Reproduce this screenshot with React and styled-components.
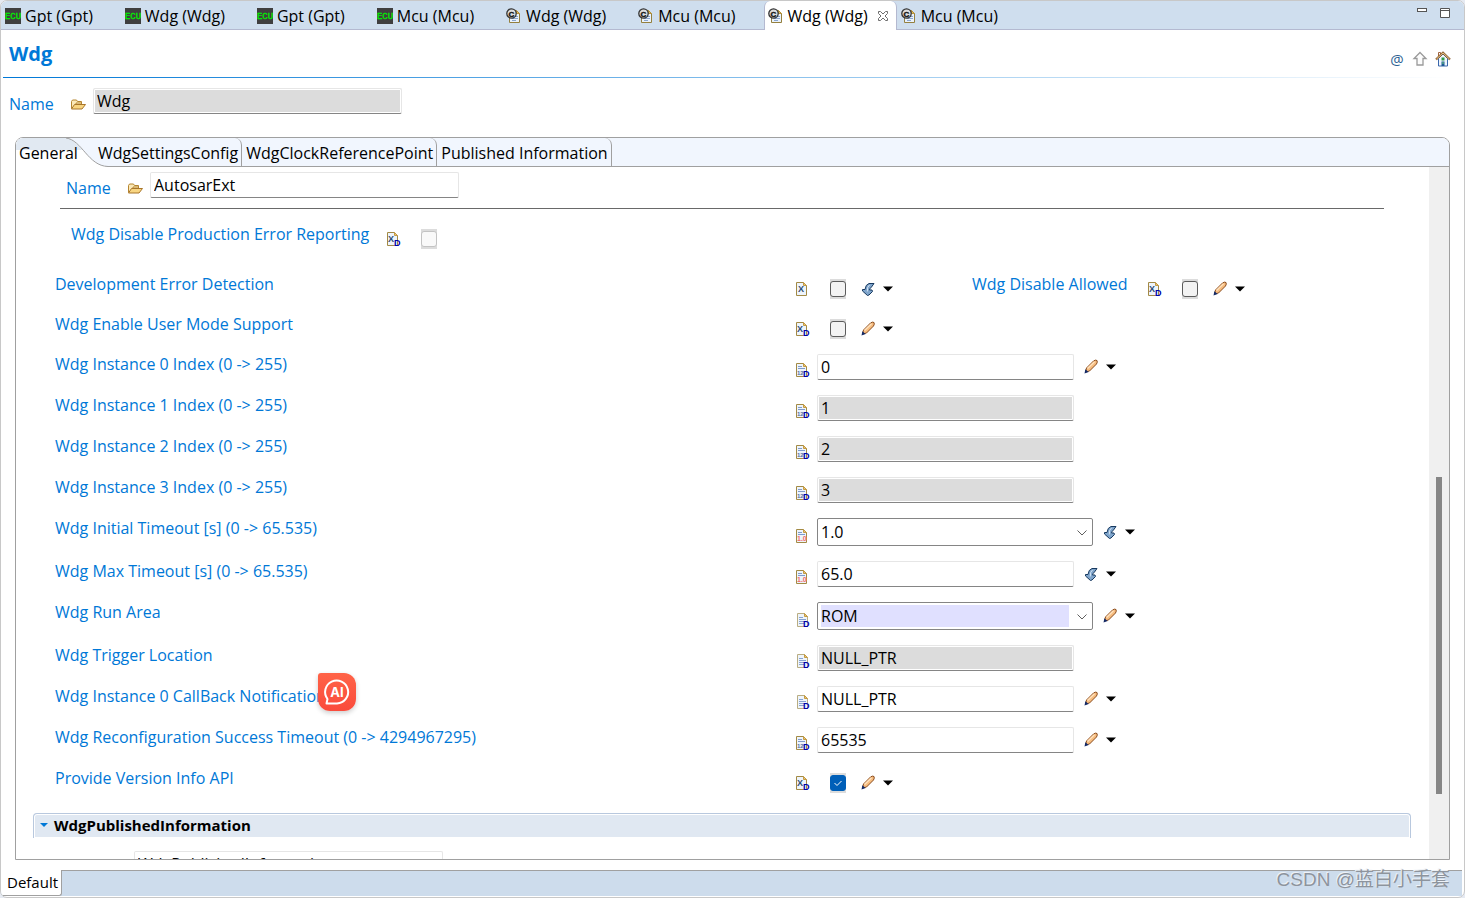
import React from 'react';
import styled, { createGlobalStyle, css } from 'styled-components';

const editorTabs = [
  { label: 'Gpt (Gpt)', icon: 'ecu' },
  { label: 'Wdg (Wdg)', icon: 'ecu' },
  { label: 'Gpt (Gpt)', icon: 'ecu' },
  { label: 'Mcu (Mcu)', icon: 'ecu' },
  { label: 'Wdg (Wdg)', icon: 'config' },
  { label: 'Mcu (Mcu)', icon: 'config' },
  { label: 'Wdg (Wdg)', icon: 'config', active: true },
  { label: 'Mcu (Mcu)', icon: 'config' },
];

const pageTabs = ['WdgSettingsConfig', 'WdgClockReferencePoint', 'Published Information'];

const fields = [
  { id: 'userMode', label: 'Wdg Enable User Mode Support', type: 'check', icon: 'bool', tool: 'pencil' },
  { id: 'index0', label: 'Wdg Instance 0 Index (0 -> 255)', type: 'text', icon: 'int', value: '0', tool: 'pencil' },
  { id: 'index1', label: 'Wdg Instance 1 Index (0 -> 255)', type: 'text', icon: 'int', value: '1', disabled: true },
  { id: 'index2', label: 'Wdg Instance 2 Index (0 -> 255)', type: 'text', icon: 'int', value: '2', disabled: true },
  { id: 'index3', label: 'Wdg Instance 3 Index (0 -> 255)', type: 'text', icon: 'int', value: '3', disabled: true },
  { id: 'initTimeout', label: 'Wdg Initial Timeout [s] (0 -> 65.535)', type: 'select', icon: 'float', value: '1.0', tool: 'calc' },
  { id: 'maxTimeout', label: 'Wdg Max Timeout [s] (0 -> 65.535)', type: 'text', icon: 'float', value: '65.0', tool: 'calc' },
  { id: 'runArea', label: 'Wdg Run Area', type: 'select', icon: 'text', value: 'ROM', tool: 'pencil', marked: true },
  { id: 'trigger', label: 'Wdg Trigger Location', type: 'text', icon: 'text', value: 'NULL_PTR', disabled: true },
  { id: 'callback', label: 'Wdg Instance 0 CallBack Notification', type: 'text', icon: 'text', value: 'NULL_PTR', tool: 'pencil', assistant: true },
  { id: 'reconfig', label: 'Wdg Reconfiguration Success Timeout (0 -> 4294967295)', type: 'text', icon: 'int', value: '65535', tool: 'pencil' },
  { id: 'versionApi', label: 'Provide Version Info API', type: 'check', icon: 'bool', tool: 'pencil', checked: true },
];

function EcuIcon() {
  return (
    <svg width="16" height="16" viewBox="0 0 16 16">
      <rect width="16" height="16" fill="#3f3f3f" />
      <text x="8" y="11" textAnchor="middle" fontFamily="Liberation Mono" fontSize="9" fill="#00f000" stroke="#00f000" strokeWidth="0.3">ECU</text>
    </svg>
  );
}

function ConfigIcon() {
  return (
    <svg width="16" height="16" viewBox="0 0 16 16">
      <path d="M3.500 2.500h7l3 3v9h-10z" fill="#eaf2fb" stroke="#94803f" />
      <path d="M10.500 2.500v3h3z" fill="#e6bd62" stroke="#b99238" />
      <path d="M6 8.500h6M6 10.500h6M6 12.500h4" stroke="#8aa6d0" />
      <circle cx="5.500" cy="5.500" r="4.700" fill="#dedede" stroke="#333" strokeWidth="1.300" />
      <text x="5.500" y="8.500" textAnchor="middle" fontFamily="Liberation Sans" fontSize="8" fontWeight="700" fill="#111" stroke="#111" strokeWidth="0.4">C</text>
    </svg>
  );
}

function CloseIcon() {
  return (
    <svg width="12" height="12" viewBox="0 0 12 12">
      <path
        d="M1.500 1.500h2L6 4l2.500-2.500h2v2L8 6l2.500 2.500v2h-2L6 8l-2.500 2.500h-2v-2L4 6 1.500 3.500z"
        fill="#fff"
        stroke="#6d6d6d"
      />
    </svg>
  );
}

function FolderIcon() {
  return (
    <svg width="16" height="16" viewBox="0 0 16 16">
      <path d="M1.500 12.500v-7l1-1.500h4l1 1.500h4v3" fill="#fbe9b8" stroke="#b5852f" />
      <path d="M1.500 13l3-4.500h11l-3.500 4.500z" fill="#f8d581" stroke="#a8752a" />
      <path d="M6 8.500v-1.500h5" fill="none" stroke="#b5852f" />
    </svg>
  );
}

// Page glyph in front of every parameter; the content tells the value type
function TypeIcon({ kind, derived = true }) {
  const small = kind === 'text' ? 1 : 0;
  return (
    <svg width="16" height="16" viewBox="0 0 16 16">
      <g transform={`translate(${small} 0)`}>
        <path d="M1.500 1.500h7l3 3v10h-10z" fill="#eef4fb" stroke={kind === 'text' ? '#b9ad82' : '#a28a45'} />
        <path d="M8.500 1.500v3h3z" fill="#e9c777" stroke="#c49b45" />
        {kind === 'text' && <path d="M3 5.500h4M3 7.500h7M3 9.500h7M3 11.500h5" stroke="#86a3d2" />}
        {(kind === 'int' || kind === 'float') && <path d="M3 4.500h4M3 6.500h7" stroke="#7f9bcb" />}
      </g>
      {kind === 'bool' && (
        <text x={derived ? 5 : 6} y="11" textAnchor="middle" fontFamily="Liberation Sans" fontSize="9" fontWeight="700" fill="#2b4a73">X</text>
      )}
      {kind === 'int' && (
        <text x="2" y="13" fontFamily="Liberation Sans" fontSize="6" fontWeight="700" fill="#54719f">12</text>
      )}
      {kind === 'float' && (
        <text x="2" y="13" fontFamily="Liberation Sans" fontSize="7" fontWeight="700" fill="#f26d6d">1.0</text>
      )}
      {derived && kind !== 'float' && (
        <text x="8" y="15" fontFamily="Liberation Sans" fontSize="9" fontWeight="700" fill="#0000a8">D</text>
      )}
    </svg>
  );
}

function PencilIcon() {
  return (
    <svg width="16" height="16" viewBox="0 0 16 16">
      <path d="M2.500 13l1-4L10.500 2q2-1.500 3.500-.5.800 1.500-.5 3.500L6.500 12z" fill="#f7bd80" stroke="#8a4b1c" />
      <path d="M4.500 9.500L11.500 2.800" stroke="#ffe2bd" strokeWidth="1.500" />
      <path d="M1.500 14.500l.8-4.200 3.400 2.700z" fill="#142a66" />
    </svg>
  );
}

function CalcIcon() {
  return (
    <svg width="16" height="16" viewBox="0 0 16 16">
      <path
        d="M14 2.500H9Q5.500 3.500 5 8.500H2.500v1.500l5 4.500 1.500-.5 3.500-3.500-.5-1.500H9.500q.5-2 2-3z"
        fill="#7fa5cc"
        stroke="#17395f"
        strokeLinejoin="round"
      />
      <path d="M9.500 4Q7 5.500 7.300 10.500" fill="none" stroke="#d3e4f4" />
    </svg>
  );
}

function Caret() {
  return (
    <svg width="10" height="6" viewBox="0 0 10 6">
      <path d="M0 0.500h10L5 5.500z" fill="#000" />
    </svg>
  );
}

function HomeIcon() {
  return (
    <svg width="16" height="16" viewBox="0 0 16 16">
      <path d="M3.500 7.500v7.500h9V7.500L8 3z" fill="#eef5fd" stroke="#3a67ac" />
      <path d="M3.500 1.500h2v4h-2z" fill="#fff" stroke="#a0623d" />
      <path d="M1 8.500L8 1.800l7 6.700" fill="none" stroke="#8a5a2a" strokeWidth="2.200" />
      <path d="M1.500 8L8 1.900 14.500 8" fill="none" stroke="#f0cf92" />
      <rect x="6.500" y="6.500" width="3" height="3" fill="#2f9a4a" />
      <rect x="6.500" y="10.500" width="3" height="4.500" fill="#1e5a94" />
      <path d="M7 12h2" stroke="#6ed07c" />
    </svg>
  );
}

function UpIcon() {
  return (
    <svg width="16" height="16" viewBox="0 0 16 16">
      <path d="M8 1.500l6 6H11v6.500H5V7.500H2z" fill="#fcfcfc" stroke="#9a9a9a" strokeWidth="1.300" />
    </svg>
  );
}

function AssistantIcon() {
  return (
    <svg width="28" height="28" viewBox="0 0 28 28">
      <path d="M3.500 25.500l1-4.500A11.500 11.500 0 1 1 14 25.500z" fill="none" stroke="#fff" strokeWidth="2" strokeLinejoin="round" />
      <text x="14" y="18.500" textAnchor="middle" fontFamily="Inter" fontSize="13" fontWeight="700" fill="#fff">AI</text>
    </svg>
  );
}

function Tools({ kind, name }) {
  return (
    <ToolButton type="button" aria-label={`Edit ${name}`}>
      {kind === 'calc' ? <CalcIcon /> : <PencilIcon />}
      <Caret />
    </ToolButton>
  );
}

function Check({ id, checked, disabled }) {
  return (
    <CheckFrame>
      <CheckInput id={id} type="checkbox" defaultChecked={checked} disabled={disabled} />
      {checked && (
        <CheckMark width="16" height="16" viewBox="0 0 16 16">
          <path d="M4.500 8l2.500 2.500L11.500 6" fill="none" stroke="#fff" />
        </CheckMark>
      )}
    </CheckFrame>
  );
}

function Control({ field }) {
  const { id, type, value, disabled, checked, marked } = field;
  if (type === 'check') {
    return <Check id={id} checked={checked} disabled={disabled} />;
  }
  if (type === 'select') {
    return (
      <SelectFrame>
        <Select id={id} defaultValue={value} $marked={marked}>
          <option>{value}</option>
        </Select>
        <Chevron width="10" height="6" viewBox="0 0 10 6">
          <path d="M0.500 0.500L5 5l4.500-4.500" fill="none" stroke="#5f5f5f" />
        </Chevron>
      </SelectFrame>
    );
  }
  return <TextInput id={id} type="text" defaultValue={value} disabled={disabled} />;
}

function FieldControls({ field }) {
  return (
    <Controls>
      <IconSlot>
        <TypeIcon kind={field.icon} derived={!field.own} />
      </IconSlot>
      <ControlGroup>
        <Control field={field} />
        {field.tool && <Tools kind={field.tool} name={field.label} />}
      </ControlGroup>
    </Controls>
  );
}

function NameField({ id, value, disabled }) {
  return (
    <NameRow>
      <NameLabel htmlFor={id}>Name</NameLabel>
      <FolderSlot>
        <FolderIcon />
      </FolderSlot>
      <TextInput id={id} type="text" defaultValue={value} disabled={disabled} $wide />
    </NameRow>
  );
}

function App() {
  const disableAllowed = { id: 'disableAllowed', label: 'Wdg Disable Allowed', type: 'check', icon: 'bool', tool: 'pencil' };
  const devError = { id: 'devError', label: 'Development Error Detection', type: 'check', icon: 'bool', tool: 'calc', own: true };
  const production = { id: 'production', label: 'Wdg Disable Production Error Reporting', type: 'check', icon: 'bool', disabled: true };

  return (
    <>
      <GlobalStyle />
      <Window>
        <EditorBar>
          {editorTabs.map((tab, i) => (
            <EditorTab key={i} type="button" $active={tab.active}>
              {tab.icon === 'ecu' ? <EcuIcon /> : <ConfigIcon />}
              <span>{tab.label}</span>
              <CloseSlot>{tab.active && <CloseIcon />}</CloseSlot>
            </EditorTab>
          ))}
          <WindowButtons>
            <WindowButton type="button" aria-label="Minimize">
              <svg width="10" height="10" viewBox="0 0 10 10">
                <rect x="0.500" y="0.500" width="9" height="3" fill="#fff" stroke="#555" />
              </svg>
            </WindowButton>
            <WindowButton type="button" aria-label="Maximize">
              <svg width="10" height="10" viewBox="0 0 10 10">
                <path d="M0.500 0.500h9v9h-9zM0.500 2.500h9" fill="#fff" stroke="#555" />
              </svg>
            </WindowButton>
          </WindowButtons>
        </EditorBar>

        <Header>
          <Title>Wdg</Title>
          <HeaderTools>
            <HeaderButton type="button" aria-label="Link">@</HeaderButton>
            <HeaderButton type="button" aria-label="Up"><UpIcon /></HeaderButton>
            <HeaderButton type="button" aria-label="Home"><HomeIcon /></HeaderButton>
          </HeaderTools>
        </Header>
        <HeaderLine />

        <ModuleName>
          <NameField id="moduleName" value="Wdg" disabled />
        </ModuleName>

        <Folder>
          <PageTabs>
            <ActivePageTab type="button">
              <TabCurve width="93" height="29" viewBox="0 0 93 29">
                <path d="M0 0H50C66 2 72 28 92 28.500V29H0z" fill="#fff" />
                <path d="M0 0H50C57 1 62 7 66 12H0z" fill="#e1e9f2" />
                <path d="M50 0C66 2 72 28 92 28.500" fill="none" stroke="#a0a0a0" />
              </TabCurve>
              <span>General</span>
            </ActivePageTab>
            {pageTabs.map((tab) => (
              <PageTab key={tab} type="button">{tab}</PageTab>
            ))}
          </PageTabs>
          <FolderBody>
            <Content>
              <ExtBlock>
                <NameField id="extName" value="AutosarExt" />
              </ExtBlock>
              <Divider />
              <ProductionRow>
                <Label htmlFor={production.id}>{production.label}</Label>
                <FieldControls field={production} />
              </ProductionRow>
              <Fields>
                <FieldRow $split>
                  <Label htmlFor={devError.id}>{devError.label}</Label>
                  <FieldControls field={devError} />
                  <SideField>
                    <Label htmlFor={disableAllowed.id}>{disableAllowed.label}</Label>
                    <FieldControls field={disableAllowed} />
                  </SideField>
                </FieldRow>
                {fields.map((field) => (
                  <FieldRow key={field.id}>
                    <LabelCell>
                      <Label htmlFor={field.id}>{field.label}</Label>
                      {field.assistant && (
                        <AssistantButton type="button" aria-label="Assistant">
                          <AssistantIcon />
                        </AssistantButton>
                      )}
                    </LabelCell>
                    <FieldControls field={field} />
                  </FieldRow>
                ))}
              </Fields>
              <SectionHeader type="button">
                <svg width="8" height="4" viewBox="0 0 8 4">
                  <path d="M0 0h8L4 4z" fill="#0078d7" />
                </svg>
                WdgPublishedInformation
              </SectionHeader>
              <PublishedBlock>
                <NameField id="publishedName" value="WdgPublishedInformation" />
              </PublishedBlock>
            </Content>
            <ScrollTrack>
              <ScrollThumb />
            </ScrollTrack>
          </FolderBody>
        </Folder>

        <BottomBar>
          <BottomTab type="button">Default</BottomTab>
        </BottomBar>
        <Watermark>CSDN @蓝白小手套</Watermark>
      </Window>
    </>
  );
}

export default App;

const GlobalStyle = createGlobalStyle`
  * {
    box-sizing: border-box;
  }
  body {
    margin: 0;
    background: #e6eaf2;
    color: #000;
    font-family: "Open Sans", "Noto Sans CJK SC", sans-serif;
    font-size: 16px;
    line-height: 20px;
  }
  button, input, select {
    font: inherit;
    color: inherit;
  }
  button {
    padding: 0;
    border: 0;
    background: none;
  }
  svg {
    display: block;
    flex: none;
  }
`;

const Window = styled.div`
  position: relative;
  display: flex;
  flex-direction: column;
  height: 100vh;
  padding-bottom: 1px;
  border: 1px solid #c8c8c8;
  border-radius: 7px;
  background: #fff;
  overflow: hidden;
`;

const EditorBar = styled.div`
  display: flex;
  flex: none;
  height: 29px;
  border-bottom: 1px solid #b4b9d0;
  background: #cfdeee;
`;

const EditorTab = styled.button`
  display: flex;
  align-items: center;
  gap: 4px;
  height: 28px;
  padding: 2px 0 0 4px;
  white-space: nowrap;
  ${(props) =>
    props.$active &&
    css`
      height: 29px;
      padding-bottom: 1px;
      padding-left: 3px;
      border: solid #b4b9d0;
      border-width: 0 1px;
      border-radius: 6px 6px 0 0;
      background: #fff;
    `}
`;

const CloseSlot = styled.span`
  width: 24px;
  padding-left: 5px;
`;

const WindowButtons = styled.div`
  display: flex;
  gap: 13px;
  margin-left: auto;
  padding: 7px 14px 0 0;
`;

const WindowButton = styled.button`
  width: 10px;
  height: 10px;
`;

const Header = styled.header`
  display: flex;
  flex: none;
  align-items: center;
  justify-content: space-between;
  height: 47px;
  padding: 0 13px 0 8px;
`;

const Title = styled.h1`
  margin: 0;
  color: #0078d7;
  font-size: 20px;
  line-height: 24px;
`;

const HeaderTools = styled.div`
  display: flex;
  gap: 7px;
  padding-top: 11px;
`;

const HeaderButton = styled.button`
  width: 16px;
  height: 16px;
  color: #2c5f93;
  font-size: 15px;
  line-height: 14px;
`;

const HeaderLine = styled.div`
  flex: none;
  height: 1px;
  margin: 0 13px 0 2px;
  background: linear-gradient(to right, #0078d7, #fff);
`;

const NameRow = styled.div`
  display: flex;
  height: 26px;
`;

const NameLabel = styled.label`
  width: 61px;
  padding-top: 6px;
  color: #0078d7;
`;

const FolderSlot = styled.span`
  width: 23px;
  padding-top: 8px;
`;

const TextInput = styled.input`
  width: ${(props) => (props.$wide ? '309px' : '257px')};
  height: 26px;
  padding: 0 3px;
  border: 1px solid #e6e6e6;
  border-bottom-color: #858585;
  border-radius: 2px;
  background: #fff;
  &:disabled {
    background: #dcdcdc;
    box-shadow: inset 0 0 0 1px #fff;
    color: #000;
  }
`;

const ModuleName = styled.div`
  flex: none;
  padding: 10px 8px 23px;
`;

const Folder = styled.section`
  display: flex;
  flex: 1;
  flex-direction: column;
  min-height: 0;
  margin: 0 14px 10px;
  border: 1px solid #a0a0a0;
  border-radius: 8px 8px 0 0;
  overflow: hidden;
`;

const PageTabs = styled.div`
  display: flex;
  flex: none;
  height: 29px;
  border-bottom: 1px solid #a0a0a0;
  background: #f1f6fe;
`;

const PageTab = styled.button`
  height: 28px;
  padding: 1px 3px 0 4px;
  border-right: 1px solid #a0a0a0;
  border-radius: 0 7px 0 0;
  white-space: nowrap;
`;

const ActivePageTab = styled.button`
  position: relative;
  width: 78px;
  height: 29px;
  padding: 0 0 0 3px;
  text-align: left;
  span {
    position: relative;
  }
`;

const TabCurve = styled.svg`
  position: absolute;
  top: 0;
  left: 0;
`;

const FolderBody = styled.div`
  display: flex;
  flex: 1;
  min-height: 0;
`;

const Content = styled.div`
  flex: 1;
  min-width: 0;
  padding: 5px 18px 0 17px;
  overflow: hidden;
`;

const ExtBlock = styled.div`
  padding-left: 33px;
`;

const Divider = styled.hr`
  height: 1px;
  margin: 10px 27px 15px;
  border: 0;
  background: #696969;
`;

const Label = styled.label`
  color: #0078d7;
  white-space: nowrap;
`;

const ProductionRow = styled.div`
  display: flex;
  gap: 17px;
  height: 25px;
  padding-left: 38px;
`;

const Fields = styled.div`
  display: flex;
  flex-direction: column;
  gap: 15px;
  padding: 25px 0 20px 22px;
`;

const FieldRow = styled.div`
  display: grid;
  grid-template-columns: ${(props) => (props.$split ? '740fr 177fr 439fr' : '740fr 616fr')};
`;

const SideField = styled.div`
  display: flex;
  gap: 19px;
`;

const LabelCell = styled.div`
  position: relative;
  justify-self: start;
  height: 20px;
`;

const Controls = styled.div`
  display: flex;
  align-items: flex-end;
  min-height: 25px;
`;

const IconSlot = styled.span`
  width: 22px;
  padding-bottom: 2px;
`;

const ControlGroup = styled.div`
  display: flex;
  align-items: center;
  gap: 9px;
`;

const ToolButton = styled.button`
  display: flex;
  align-items: center;
  gap: 7px;
`;

const CheckFrame = styled.span`
  position: relative;
  display: block;
  width: 16px;
  height: 20px;
  margin: 0 5px 0 13px;
  padding: 2px 0;
  background: #dcdcdc;
`;

const CheckInput = styled.input`
  appearance: none;
  display: block;
  width: 16px;
  height: 16px;
  margin: 0;
  border: 1px solid #5c5c5c;
  border-radius: 3px;
  background: #f3f3f3;
  &:checked {
    border-color: #005fb8;
    background: #005fb8;
  }
  &:disabled {
    border-color: #c3c3c3;
    background: #f9f9f9;
  }
`;

const CheckMark = styled.svg`
  position: absolute;
  top: 2px;
  left: 0;
  pointer-events: none;
`;

const SelectFrame = styled.span`
  position: relative;
  display: block;
  height: 28px;
`;

const Select = styled.select`
  appearance: none;
  width: 276px;
  height: 28px;
  padding: 2px 23px 2px 3px;
  border: 1px solid #858585;
  border-radius: 2px;
  background: ${(props) => (props.$marked ? 'linear-gradient(#e0e0ff, #e0e0ff) content-box, #fff' : '#fff')};
`;

const Chevron = styled.svg`
  position: absolute;
  top: 12px;
  right: 6px;
  pointer-events: none;
`;

const AssistantButton = styled.button`
  position: absolute;
  top: -13px;
  left: 100%;
  display: flex;
  align-items: center;
  justify-content: center;
  width: 38px;
  height: 38px;
  margin-left: -8px;
  border-radius: 3px 12px 12px 12px;
  background: linear-gradient(#ff6347, #fa4b3c);
  box-shadow: 0 2px 5px rgba(0, 0, 0, 0.2);
`;

const SectionHeader = styled.button`
  display: flex;
  align-items: center;
  gap: 6px;
  width: 100%;
  height: 25px;
  padding: 0 6px 2px;
  border: 1px solid #b8c8de;
  border-bottom: 0;
  border-radius: 4px 4px 0 0;
  background: #e0e8f2;
  box-shadow: inset 0 0 0 1px #fff;
  font-size: 15px;
  font-weight: 700;
`;

const PublishedBlock = styled.div`
  padding: 13px 0 0 17px;
`;

const ScrollTrack = styled.div`
  display: grid;
  grid-template-rows: 310fr 317fr 65fr;
  width: 20px;
  background: #f0f0f0;
`;

const ScrollThumb = styled.div`
  grid-row: 2;
  width: 6px;
  margin-left: 7px;
  background: #868686;
`;

const BottomBar = styled.footer`
  display: flex;
  flex: none;
  height: 26px;
  margin-right: 2px;
  background: #cddcec;
  box-shadow: inset 0 1px 0 #a0a0a0;
`;

const BottomTab = styled.button`
  padding: 0 3px 2px 6px;
  border: solid #a0a0a0;
  border-width: 0 1px 1px 0;
  border-radius: 0 0 3px 0;
  background: #fff;
  font-size: 15px;
`;

const Watermark = styled.div`
  position: absolute;
  right: 14px;
  bottom: 4px;
  color: #8d949d;
  font-family: "Liberation Sans", "Noto Sans CJK SC", sans-serif;
  font-size: 19px;
  line-height: 26px;
  text-shadow: -1px -1px 0 #eef2f7;
  white-space: nowrap;
`;
